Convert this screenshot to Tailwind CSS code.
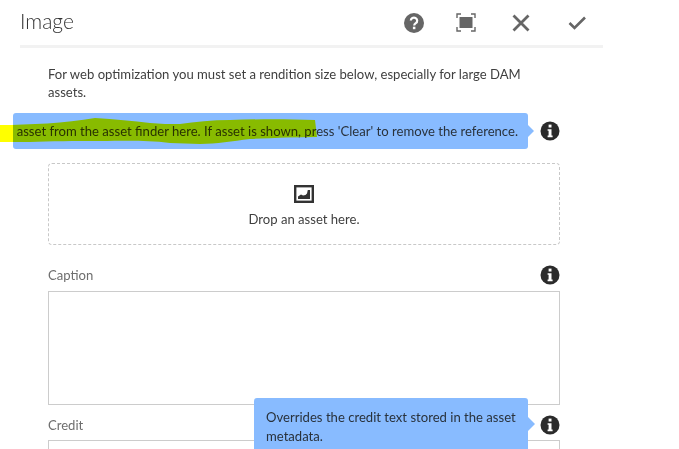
<!DOCTYPE html>
<html lang="en">
<head>
    <meta charset="UTF-8">
    <title>Image</title>
    <script src="https://cdn.jsdelivr.net/npm/@tailwindcss/browser@4"></script>
</head>
<body class="bg-white">
    <div class="relative h-[449px] w-[679px] overflow-hidden bg-white font-['Lato',sans-serif] text-[13.1px] text-[#3f3f3f]">

        <!-- dialog header -->
        <div class="ml-5 flex h-[48px] w-[583px] items-center border-b-[3px] border-[#f2f2f2] pb-[3px]">
            <h1 class="flex-1 text-[21px] font-light text-[#333333]">Image</h1>
            <svg class="absolute left-[404px] top-[13px] h-5 w-5" viewBox="0 0 20 20">
                <circle cx="10" cy="10" r="10" fill="#666"/>
                <path d="M6.800 7.600a3.200 3 0 1 1 5 2.500c-1.100.8-1.600 1.200-1.600 2.400" fill="none" stroke="#fff" stroke-width="2.200"/>
                <rect x="8.900" y="13.700" width="2.500" height="2.500" fill="#fff"/>
            </svg>
            <svg class="absolute left-[456px] top-[13px] h-[19px] w-5" viewBox="0 0 20 19">
                <path d="M1 5V1h4M15 1h4v4M19 14v4h-4M5 18H1v-4" fill="none" stroke="#666" stroke-width="1.400"/>
                <rect x="3.500" y="4" width="13" height="11" fill="#666"/>
            </svg>
            <svg class="absolute left-[512px] top-[14px] h-[18px] w-[18px]" viewBox="0 0 18 18">
                <path d="M1.500 1.500l15 15M16.500 1.500l-15 15" fill="none" stroke="#666" stroke-width="2.800"/>
            </svg>
            <svg class="absolute left-[568px] top-[16px] h-[14px] w-[18px]" viewBox="0 0 18 14">
                <path d="M1.500 7l5 5L17 1.500" fill="none" stroke="#666" stroke-width="2.600"/>
            </svg>
        </div>

        <!-- form -->
        <div class="ml-12 w-[512px]">
            <p class="mt-[17px] w-[500px] leading-[18px]">For web optimization you must set a rendition size below, especially for large DAM assets.</p>

            <div class="mt-[20px] flex h-[20px] justify-end">
                <svg class="h-5 w-5" viewBox="0 0 20 20">
                    <circle cx="10" cy="10" r="9.500" fill="#2b2b2b"/>
                    <rect x="8.600" y="3.600" width="2.900" height="2.900" fill="#fff"/>
                    <path d="M7.600 8.200h3.900v6.400h1.100v1.600H7.600v-1.600h1v-4.800h-1z" fill="#fff"/>
                </svg>
            </div>

            <div class="mt-[22px] flex h-[82px] flex-col items-center justify-center rounded border border-dashed border-[#c8c8c8] pt-[4px]">
                <svg class="h-[18px] w-5" viewBox="0 0 20 18">
                    <rect x="1.200" y="1.200" width="17.600" height="15.600" fill="none" stroke="#333" stroke-width="2.400"/>
                    <path d="M4 14v-2.500l3-2 2 1 2.500-.5 1.500-1.500.8-3.500H16v9z" fill="#333"/>
                </svg>
                <span class="mt-[7px] leading-[18px]">Drop an asset here.</span>
            </div>

            <div class="mt-[20px] flex h-[20px] items-center justify-between">
                <label class="pt-[2px] text-[#6e6e6e]">Caption</label>
                <svg class="h-5 w-5" viewBox="0 0 20 20">
                    <circle cx="10" cy="10" r="9.500" fill="#2b2b2b"/>
                    <rect x="8.600" y="3.600" width="2.900" height="2.900" fill="#fff"/>
                    <path d="M7.600 8.200h3.900v6.400h1.100v1.600H7.600v-1.600h1v-4.800h-1z" fill="#fff"/>
                </svg>
            </div>
            <div class="mt-[6px] h-[114px] border border-[#cccccc]"></div>

            <div class="mt-[10px] flex h-[20px] items-center justify-between">
                <label class="pt-[2px] text-[#6e6e6e]">Credit</label>
                <svg class="h-5 w-5" viewBox="0 0 20 20">
                    <circle cx="10" cy="10" r="9.500" fill="#2b2b2b"/>
                    <rect x="8.600" y="3.600" width="2.900" height="2.900" fill="#fff"/>
                    <path d="M7.600 8.200h3.900v6.400h1.100v1.600H7.600v-1.600h1v-4.800h-1z" fill="#fff"/>
                </svg>
            </div>
            <div class="mt-[5px] h-[40px] border border-[#cccccc]"></div>
        </div>

        <!-- tooltips -->
        <div class="absolute left-[13px] top-[113px] flex h-[36px] w-[515px] items-center justify-end whitespace-nowrap rounded-[3px] bg-[#88bbff] pr-[10px] pt-[2px] text-[#29323c]">
            asset from the asset finder here. If asset is shown, press 'Clear' to remove the reference.
            <span class="absolute -right-[6px] top-[12px] h-0 w-0 border-y-[6px] border-l-[6px] border-y-transparent border-l-[#88bbff]"></span>
        </div>
        <div class="absolute left-[254px] top-[398px] h-[70px] w-[274px] rounded-[3px] bg-[#88bbff] px-3 pt-[10px] leading-[19px] text-[#29323c]">
            Overrides the credit text stored in the asset metadata.
            <span class="absolute -right-[7px] top-[19px] h-0 w-0 border-y-[7px] border-l-[7px] border-y-transparent border-l-[#88bbff]"></span>
        </div>

        <!-- marker highlight over the first tooltip -->
        <svg class="absolute left-0 top-[118px] mix-blend-multiply" width="320" height="28" viewBox="0 0 320 28">
            <path d="M0 7C30 7 65 5 95 0c20 1 38 3 55 5 10 1 20 1 30 1 15-2 32-4 50-4 28-1 58-1 85 0l2 17c-22 0-45 1-67 2-18 2-33 5-50 5-10 0-20-1-30-1-25-3-45-2-70-2-25 0-50 0-70 1H0z" fill="#ffff00"/>
        </svg>
    </div>
</body>
</html>
